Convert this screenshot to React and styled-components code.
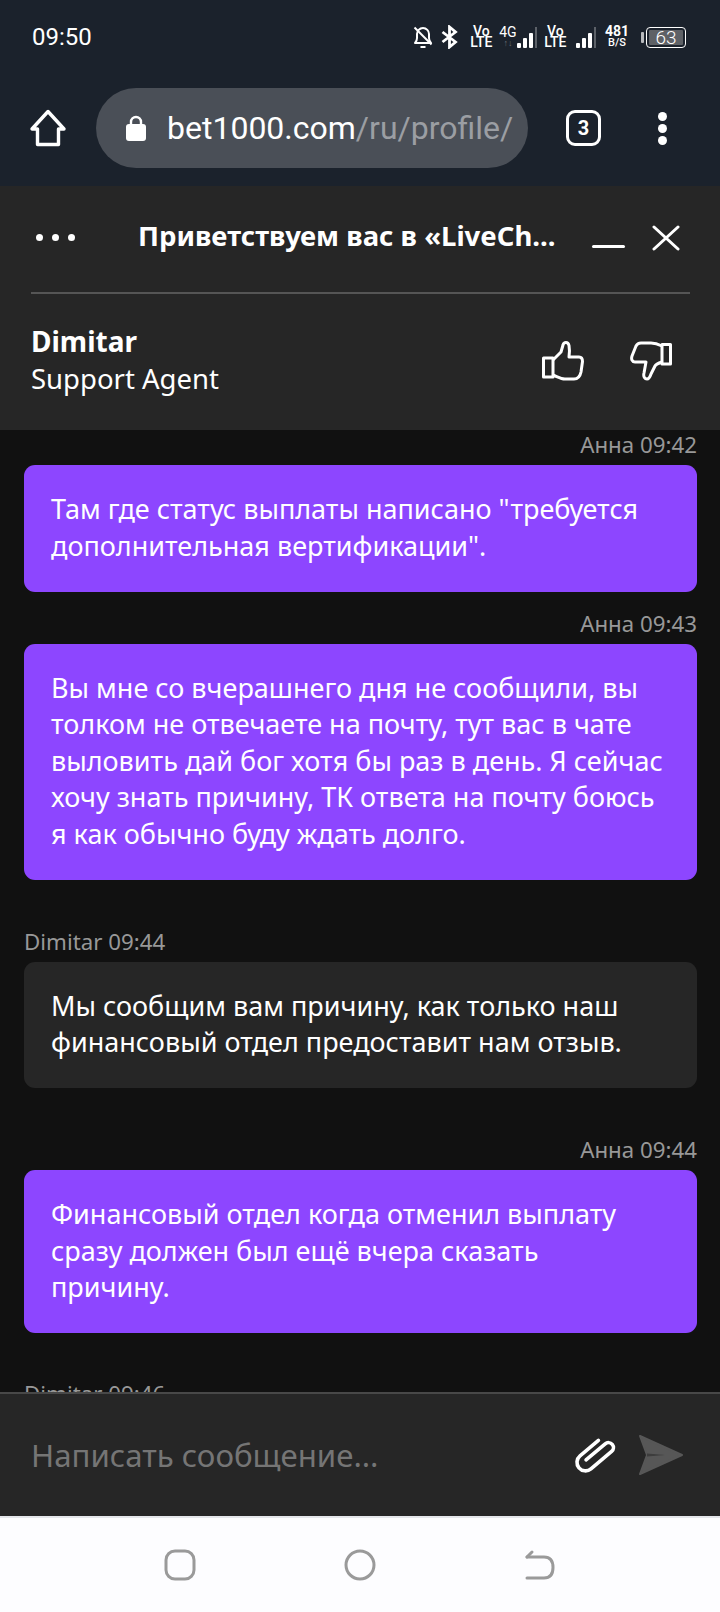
import React from 'react';
import styled, { createGlobalStyle } from 'styled-components';

const GlobalStyle = createGlobalStyle`
  html, body { margin: 0; padding: 0; background: #111; }
  * { box-sizing: border-box; }
`;

const messages = [
  { mine: true, meta: 'Анна 09:42', gap: 0, text: 'Там где статус выплаты написано "требуется\nдополнительная вертификации".' },
  { mine: true, meta: 'Анна 09:43', gap: 17, text: 'Вы мне со вчерашнего дня не сообщили, вы\nтолком не отвечаете на почту, тут вас в чате\nвыловить дай бог хотя бы раз в день. Я сейчас\nхочу знать причину, ТК ответа на почту боюсь\nя как обычно буду ждать долго.' },
  { mine: false, meta: 'Dimitar 09:44', gap: 47, text: 'Мы сообщим вам причину, как только наш\nфинансовый отдел предоставит нам отзыв.' },
  { mine: true, meta: 'Анна 09:44', gap: 47, text: 'Финансовый отдел когда отменил выплату\nсразу должен был ещё вчера сказать\nпричину.' },
  { mine: false, meta: 'Dimitar 09:46', gap: 46, text: '' },
];

function App() {
  return (
    <Page>
      <GlobalStyle />
      <StatusBar>
        <Clock>09:50</Clock>
        <StatusIcons>
          <svg width="20" height="24" viewBox="0 0 20 24" fill="none" stroke="#fff" strokeWidth="2" strokeLinejoin="round">
            <path d="M2 18c1.500-1.500 2-3 2-5V9c0-3 2.500-6 6-6s6 3 6 6v4c0 2 .5 3.500 2 5z" />
            <path d="M7.500 22h5" />
            <path d="M1.500 2.500 18.500 19.500" />
          </svg>
          <BluetoothSlot>
            <svg width="17" height="24" viewBox="0 0 17 24" fill="none" stroke="#fff" strokeWidth="2.800">
              <path d="M1.500 7l13 10-6 5V2l6 5-13 10" />
            </svg>
          </BluetoothSlot>
          <NetStack>
            <span>Vo</span>
            <span>LTE</span>
          </NetStack>
          <Network>
            <FourG>
              <span>4G</span>
              <small>↑↓</small>
            </FourG>
            <Signal />
          </Network>
          <NetStack>
            <span>Vo</span>
            <span>LTE</span>
          </NetStack>
          <SecondSignal>
            <Signal />
          </SecondSignal>
          <Speed>
            <b>481</b>
            <span>B/S</span>
          </Speed>
          <Battery>
            <BatteryCap />
            <BatteryBody>
              <BatteryFill />
              <BatteryText>63</BatteryText>
            </BatteryBody>
          </Battery>
        </StatusIcons>
      </StatusBar>

      <BrowserBar>
        <svg width="38" height="38" viewBox="0 0 38 38" fill="none" stroke="#fff" strokeWidth="3.400" strokeLinejoin="round" strokeLinecap="round">
          <path d="M19 2.500 3 20h5.500v15.500h21V20H35z" />
        </svg>
        <UrlPill>
          <svg width="22" height="28" viewBox="0 0 22 28" fill="#fff">
            <path d="M6 12V8a5 5 0 0 1 10 0v4" fill="none" stroke="#fff" strokeWidth="2.400" />
            <rect x="1" y="10" width="20" height="17" rx="3" />
          </svg>
          <UrlText>
            bet1000.com<UrlPath>/ru/profile/</UrlPath>
          </UrlText>
        </UrlPill>
        <TabCount>3</TabCount>
        <MenuDots>
          <i />
          <i />
          <i />
        </MenuDots>
      </BrowserBar>

      <ChatHeader>
        <Ellipsis>
          <i />
          <i />
          <i />
        </Ellipsis>
        <ChatTitle>Приветствуем вас в «LiveCh...</ChatTitle>
        <Minimize />
        <svg width="28" height="26" viewBox="0 0 28 26" stroke="#fff" strokeWidth="3" strokeLinecap="round">
          <path d="M2 2l24 22M26 2 2 24" />
        </svg>
      </ChatHeader>

      <AgentBar>
        <AgentInfo>
          <AgentName>Dimitar</AgentName>
          <AgentRole>Support Agent</AgentRole>
        </AgentInfo>
        <Rating>
          <svg width="44" height="40" viewBox="0 0 44 40" fill="none" stroke="#fff" strokeWidth="3" strokeLinejoin="round">
            <path d="M2.500 17H12v19H2.500z" />
            <path d="M12 19l8-8 2-7c.5-2 1.500-2.500 3-2.500 1.500 0 2.500 1 3 3 .7 3.500.5 7.500 0 11.500h10c3 0 3.500 2 3.500 4.500L40 31c-1 5-3 7-7 7h-9c-4 0-7-2-12-4" />
          </svg>
          <svg width="42" height="40" viewBox="0 0 42 40" fill="none" stroke="#fff" strokeWidth="3" strokeLinejoin="round">
            <path d="M32 3.500h8.500V23H32z" />
            <path d="M32 5c-4-2-7-3-11-3H11C8 2 7 3 6 5L2 15c-1 3 0 6 3 6h11l-2 11c-1 4 1 6 3 6s3-2 4-5l4-8c1-2 4-3 7-4" />
          </svg>
        </Rating>
      </AgentBar>

      <Messages>
        {messages.map((m) => (
          <Message key={m.meta} $gap={m.gap}>
            <Meta $mine={m.mine}>{m.meta}</Meta>
            {m.text && <Bubble $mine={m.mine}>{m.text}</Bubble>}
          </Message>
        ))}
      </Messages>

      <Composer>
        <Placeholder>Написать сообщение...</Placeholder>
        <svg width="46" height="46" viewBox="-1 -1 46 46" fill="none" stroke="#fff" strokeWidth="3.600" strokeLinecap="round" strokeLinejoin="round">
          <path d="M13 10v24a8.500 8.500 0 0 0 17 0V7a5 5 0 0 0-10 0v25" transform="rotate(50 22 22)" />
        </svg>
        <svg width="46" height="42" viewBox="0 0 46 42" fill="#575757">
          <path d="M2 2 44 21 2 40 9 21z" stroke="#575757" strokeWidth="2" strokeLinejoin="round" />
          <path d="M9 19.500 27 21 9 22.500z" fill="#3d3d3d" />
        </svg>
      </Composer>

      <NavBar>
        <svg width="32" height="32" viewBox="0 0 32 32" fill="none" stroke="#9a9a9a" strokeWidth="3">
          <rect x="2" y="2" width="28" height="28" rx="9" />
        </svg>
        <svg width="32" height="32" viewBox="0 0 32 32" fill="none" stroke="#9a9a9a" strokeWidth="3">
          <circle cx="16" cy="16" r="14" />
        </svg>
        <svg width="32" height="32" viewBox="0 0 32 32" fill="none" stroke="#9a9a9a" strokeWidth="3" strokeLinecap="round" strokeLinejoin="round">
          <path d="M3 8l5-5" />
          <path d="M3 8h17c6 0 9 4 9 10.500S26 29 20 29H3" />
        </svg>
      </NavBar>
    </Page>
  );
}

function Signal() {
  return (
    <SignalBars>
      <SignalBar $h={5} />
      <SignalBar $h={10} />
      <SignalBar $h={15} />
      <SignalTrack />
    </SignalBars>
  );
}

export default App;

const Page = styled.div`
  width: 720px;
  height: 1612px;
  display: flex;
  flex-direction: column;
  overflow: hidden;
  font-family: "Noto Sans", "Open Sans", sans-serif;
  color: #fff;
`;

const StatusBar = styled.div`
  height: 60px;
  flex: none;
  display: flex;
  align-items: center;
  justify-content: space-between;
  padding: 14px 34px 0 32px;
  background: #1b222c;
`;

const Clock = styled.div`
  font-family: Roboto, sans-serif;
  font-size: 24px;
  line-height: 1;
`;

const StatusIcons = styled.div`
  display: flex;
  align-items: center;
  gap: 8px;
  font-family: Roboto, sans-serif;
`;

const BluetoothSlot = styled.div`
  display: flex;
  margin-right: 5px;
`;

const NetStack = styled.div`
  display: flex;
  flex-direction: column;
  align-items: center;
  font-size: 14px;
  line-height: 11.500px;
  font-weight: 500;
  width: 21px;
`;

const Network = styled.div`
  display: flex;
  align-items: flex-end;
  gap: 1px;
`;

const FourG = styled.div`
  display: flex;
  flex-direction: column;
  align-items: center;
  font-size: 14px;
  line-height: 12px;
  width: 16px;

  small {
    font-size: 9px;
    line-height: 10px;
    color: #6a6e74;
  }
`;

const SecondSignal = styled.div`
  margin-left: 2px;
`;

const SignalBars = styled.div`
  display: flex;
  align-items: flex-end;
  gap: 2px;
  height: 21px;
`;

const SignalBar = styled.span`
  width: 4px;
  height: ${(p) => p.$h}px;
  border-radius: 1px;
  background: #fff;
`;

const SignalTrack = styled.span`
  width: 2px;
  height: 21px;
  background: #5c6168;
`;

const Speed = styled.div`
  display: flex;
  flex-direction: column;
  align-items: center;
  line-height: 11px;
  margin-left: 1px;

  b {
    font-size: 14px;
    font-weight: 700;
  }

  span {
    font-size: 11px;
    font-weight: 500;
  }
`;

const Battery = styled.div`
  display: flex;
  align-items: center;
  gap: 2px;
  margin-left: 4px;
`;

const BatteryCap = styled.span`
  width: 3px;
  height: 11px;
  background: #b8babd;
  border-radius: 1px;
`;

const BatteryBody = styled.div`
  position: relative;
  width: 40px;
  height: 21px;
  border: 1.500px solid #fff;
  border-radius: 4px;
  padding: 2px;
`;

const BatteryFill = styled.div`
  width: 100%;
  height: 100%;
  background: #5e6166;
  border-radius: 1px;
`;

const BatteryText = styled.span`
  position: absolute;
  inset: 0;
  display: flex;
  align-items: center;
  justify-content: center;
  font-size: 19px;
  font-weight: 300;
`;

const BrowserBar = styled.div`
  height: 126px;
  flex: none;
  display: flex;
  align-items: center;
  padding: 10px 0 0 29px;
  background: #1b222c;
`;

const UrlPill = styled.div`
  width: 432px;
  height: 80px;
  margin-left: 29px;
  border-radius: 40px;
  background: #4a4f57;
  display: flex;
  align-items: center;
  gap: 20px;
  padding-left: 29px;
  overflow: hidden;
`;

const UrlText = styled.div`
  font-family: Roboto, sans-serif;
  font-size: 32px;
  white-space: nowrap;
`;

const UrlPath = styled.span`
  color: #9b9ea3;
`;

const TabCount = styled.div`
  width: 35px;
  height: 36px;
  margin-left: 38px;
  border: 3.500px solid #fff;
  border-radius: 9px;
  display: flex;
  align-items: center;
  justify-content: center;
  font-family: Roboto, sans-serif;
  font-size: 20px;
  font-weight: 700;
`;

const MenuDots = styled.div`
  display: flex;
  flex-direction: column;
  gap: 3px;
  margin-left: 57px;

  i {
    width: 9px;
    height: 9px;
    border-radius: 50%;
    background: #fff;
  }
`;

const ChatHeader = styled.div`
  height: 106px;
  flex: none;
  display: flex;
  align-items: center;
  padding: 0 40px 3px 36px;
  background: #262626;
`;

const Ellipsis = styled.div`
  display: flex;
  gap: 9px;
  width: 102px;

  i {
    width: 7px;
    height: 7px;
    border-radius: 50%;
    background: #fff;
  }
`;

const ChatTitle = styled.div`
  width: 454px;
  font-size: 27.500px;
  font-weight: 700;
  white-space: nowrap;
  padding-bottom: 5px;
`;

const Minimize = styled.span`
  width: 33px;
  height: 3px;
  margin: 18px 27px 0 0;
  border-radius: 2px;
  background: #fff;
`;

const AgentBar = styled.div`
  height: 138px;
  flex: none;
  display: flex;
  align-items: center;
  justify-content: space-between;
  padding: 0 48px 0 31px;
  background: #262626;
  position: relative;

  &::before {
    content: '';
    position: absolute;
    top: 0;
    left: 31px;
    right: 30px;
    height: 2px;
    background: #555;
  }
`;

const AgentInfo = styled.div`
  display: flex;
  flex-direction: column;
  padding-bottom: 4px;
`;

const AgentName = styled.div`
  font-size: 28px;
  font-weight: 700;
  line-height: 38px;
`;

const AgentRole = styled.div`
  font-size: 27.500px;
  line-height: 37px;
`;

const Rating = styled.div`
  display: flex;
  gap: 45px;
`;

const Messages = styled.div`
  flex: 1;
  min-height: 0;
  overflow: hidden;
  background: #111;
  padding: 0 23px 0 24px;
`;

const Message = styled.div`
  margin-top: ${(p) => p.$gap}px;
`;

const Meta = styled.div`
  text-align: ${(p) => (p.$mine ? 'right' : 'left')};
  color: #989898;
  font-size: 22.300px;
  line-height: 30px;
  padding-bottom: 5px;
`;

const Bubble = styled.div`
  background: ${(p) => (p.$mine ? '#8d46ff' : '#262626')};
  border-radius: 11px;
  padding: 26px 27px 27.500px;
  font-size: 27px;
  line-height: 36.500px;
  white-space: pre-line;
`;

const Composer = styled.div`
  height: 124px;
  flex: none;
  display: flex;
  align-items: center;
  padding: 0 36px 0 31px;
  gap: 20px;
  background: #262626;
  border-top: 2px solid #484848;
`;

const Placeholder = styled.div`
  flex: 1;
  font-size: 31.200px;
  color: #757575;
`;

const NavBar = styled.div`
  height: 96px;
  flex: none;
  display: flex;
  align-items: center;
  justify-content: center;
  gap: 148px;
  background: #fdfdff;
  border-top: 2px solid #e4e6ea;
`;
